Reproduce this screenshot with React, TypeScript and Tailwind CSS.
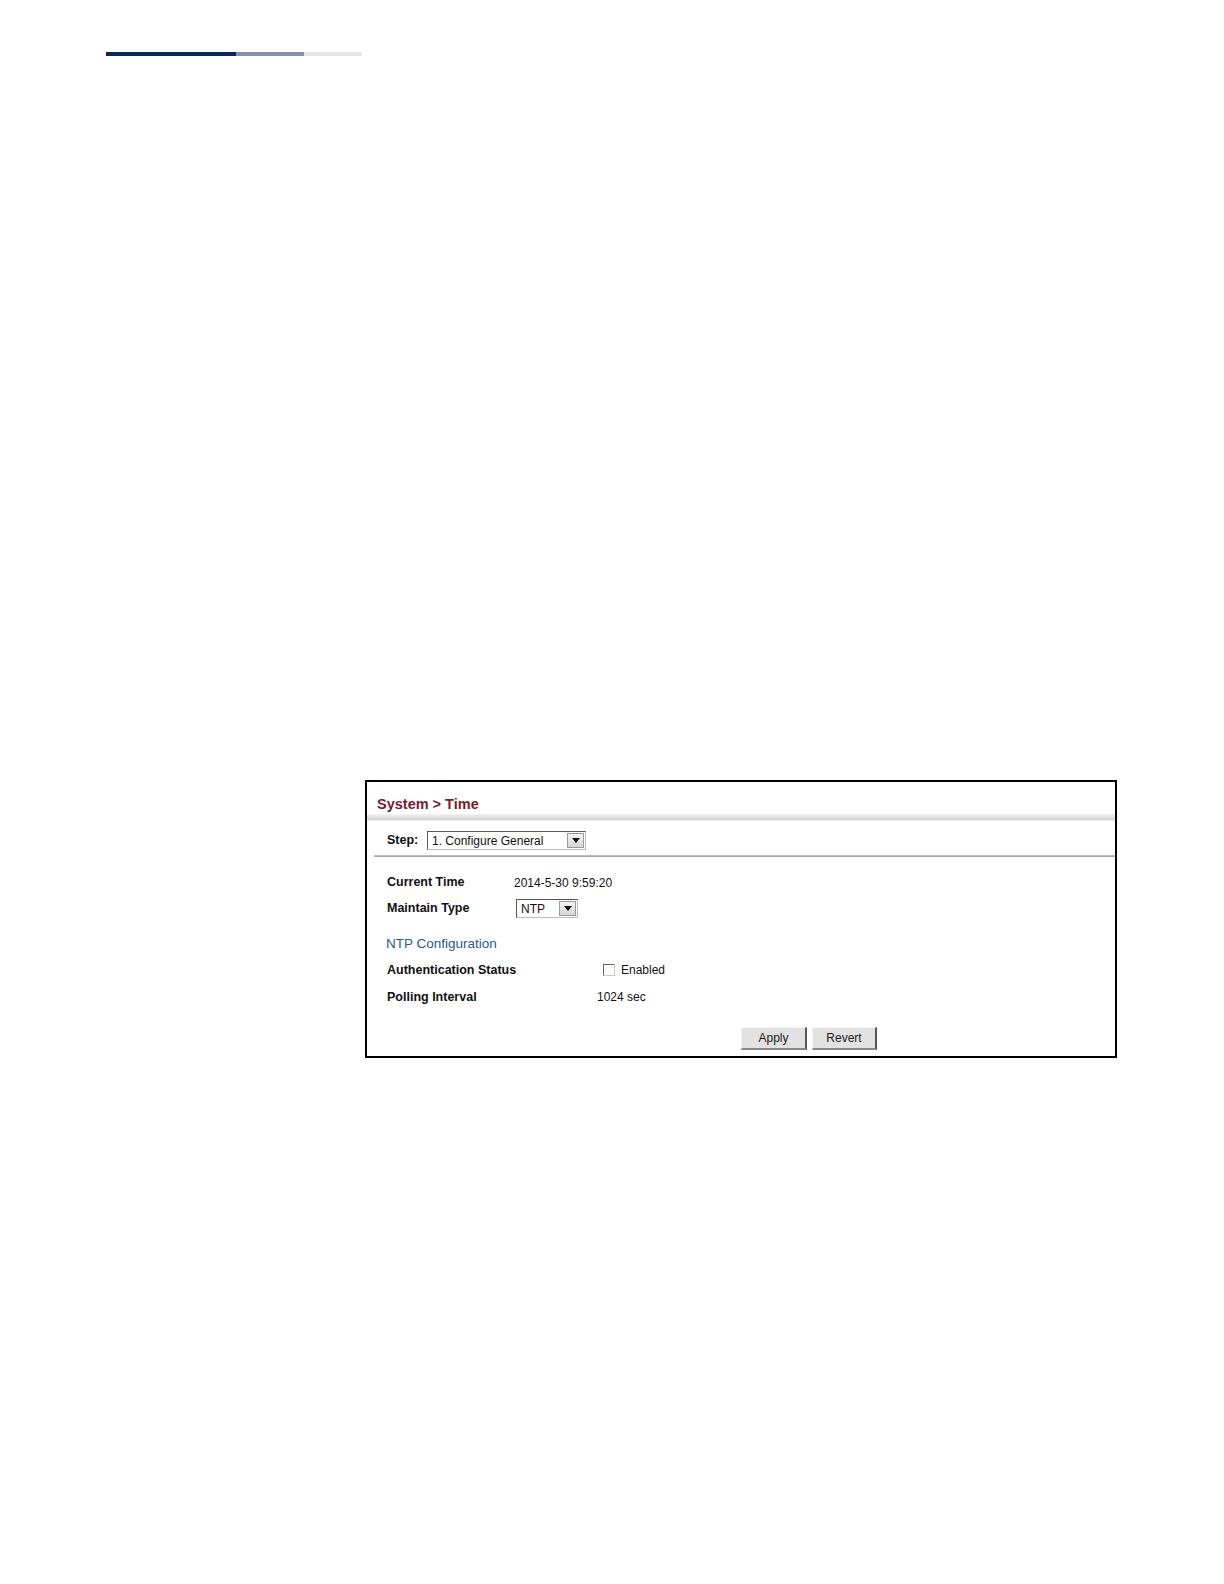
import React from "react";

const font = { fontFamily: '"Liberation Sans", Arial, sans-serif' };

function Arrow() {
  return (
    <div className="flex h-full w-[17px] items-center justify-center border border-[#9a9a9a] bg-gradient-to-b from-[#f4f4f4] to-[#d6d6d6]">
      <svg width="8" height="5" viewBox="0 0 8 5">
        <path d="M0 0 L8 0 L4 5 Z" fill="#111" />
      </svg>
    </div>
  );
}

function Select({ width, label }: { width: number; label: string }) {
  return (
    <div
      className="flex h-[19px] items-center border border-[#555] border-r-[#bbb] border-b-[#bbb] bg-white pl-[4px] pr-[1px] py-[1px]"
      style={{ width }}
    >
      <span className="flex-1 text-[12px] leading-none text-[#111]">{label}</span>
      <Arrow />
    </div>
  );
}

function Button({ label, w }: { label: string; w: number }) {
  return (
    <div
      className="flex h-[23px] items-center justify-center border border-[#f4f4f4] border-r-[2px] border-b-[2px] border-r-[#555] border-b-[#888] bg-[#e2e2e2] text-[12px] text-[#1a1a1a]"
      style={{ width: w }}
    >
      {label}
    </div>
  );
}

export default function App() {
  return (
    <div className="min-h-[1584px] w-[1224px] bg-white" style={font}>
      <div className="flex pt-[52px] pl-[106px]">
        <div className="h-[4px] w-[130px] bg-[#0c2660]" />
        <div className="h-[4px] w-[68px] bg-[#8391ae]" />
        <div className="h-[4px] w-[58px] bg-[#e6e7ea]" />
      </div>

      <div className="ml-[365px] mt-[724px] h-[278px] w-[752px] border-2 border-black">
        <div className="flex h-[32px] items-center pl-[10px] pt-[14px]">
          <span className="text-[14.5px] font-bold text-[#7a1a2c]">System &gt; Time</span>
        </div>
        <div className="h-[6px] bg-gradient-to-b from-[#f2f2f2] to-[#d4d4d4]" />
        <div className="h-[1px] bg-[#f0f0f0]" />
        <div className="flex h-[34px] items-start pl-[20px] pt-[10px]">
          <span className="flex h-[19px] w-[40px] items-center text-[12.5px] font-bold text-[#111]">Step:</span>
          <Select width={159} label="1. Configure General" />
        </div>
        <div className="ml-[7px] h-[2px] bg-gradient-to-b from-[#c8c8c8] to-[#9c9c9c]" />

        <div className="pl-[20px] pt-[13px]">
          <div className="flex h-[25px] items-center">
            <span className="w-[127px] text-[12.5px] font-bold text-[#111]">Current Time</span>
            <span className="text-[12px] text-[#111]">2014-5-30 9:59:20</span>
          </div>
          <div className="flex h-[27px] items-center">
            <span className="w-[129px] text-[12.5px] font-bold text-[#111]">Maintain Type</span>
            <Select width={62} label="NTP" />
          </div>
          <div className="flex h-[38px] items-center pt-[6px]">
            <span className="-ml-[1px] text-[13.5px] text-[#2a579c]">NTP Configuration</span>
          </div>
          <div className="flex h-[20px] items-center">
            <span className="w-[216px] text-[12.5px] font-bold text-[#111]">Authentication Status</span>
            <div className="h-[12px] w-[12px] border border-[#666] border-r-[#ccc] border-b-[#ccc] bg-white" />
            <span className="ml-[6px] text-[12px] text-[#111]">Enabled</span>
          </div>
          <div className="flex h-[34px] items-center">
            <span className="w-[210px] text-[12.5px] font-bold text-[#111]">Polling Interval</span>
            <span className="text-[12px] text-[#111]">1024 sec</span>
          </div>
        </div>
        <div className="flex gap-[5px] pl-[374px] pt-[13px]">
          <Button label="Apply" w={66} />
          <Button label="Revert" w={65} />
        </div>
      </div>
    </div>
  );
}
